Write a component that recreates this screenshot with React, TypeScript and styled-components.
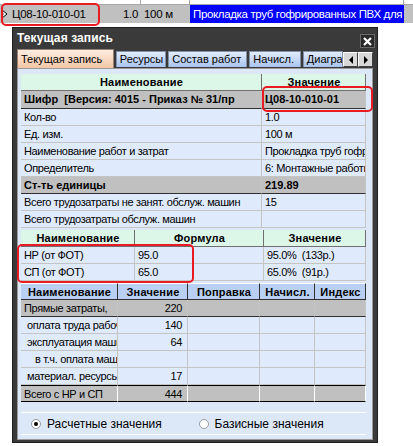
import React, { FC } from "react";
import styled, { createGlobalStyle, css } from "styled-components";

const GlobalStyle = createGlobalStyle`
  body {
    margin: 0;
    background: #ffffff;
    font-family: "Liberation Sans", Arial, sans-serif;
  }
`;

const Page = styled.div`
  width: 413px;
  height: 446px;
  overflow: hidden;
  position: relative;
`;

// строка таблицы за окном
const TopGrid = styled.div`
  display: flex;
  flex-direction: column;
`;

const PrevRow = styled.div`
  display: grid;
  grid-template-columns: 141px 49px 214px 9px;
  height: 4px;
  border-bottom: 1px solid #a8a8a8;
`;

const PrevCell = styled.div`
  border-right: 1px solid #a8a8a8;
`;

const CurRow = styled.div`
  display: grid;
  grid-template-columns: 9px 91px 41px 49px 214px 9px;
  height: 18px;
  background: #c0c0c0;
  border-bottom: 1px solid #ffffff;
  font-size: 11.5px;
  letter-spacing: -0.3px;
  line-height: 18px;
  position: relative;
`;

const RowCell = styled.div<{ align?: string; selected?: boolean }>`
  text-align: ${(p) => p.align || "left"};
  white-space: nowrap;
  overflow: hidden;
  padding: 0 3px;
  ${(p) =>
    p.selected &&
    css`
      background: #0000ff;
      color: #ffffff;
      font-size: 11.5px;
      letter-spacing: -0.35px;
    `}
`;

const Indicator = styled.div`
  display: flex;
  align-items: center;
  justify-content: center;
`;

const Mark = styled.div<{ l: number; t: number; w: number; h: number }>`
  position: absolute;
  left: ${(p) => p.l}px;
  top: ${(p) => p.t}px;
  width: ${(p) => p.w}px;
  height: ${(p) => p.h}px;
  border: 2.5px solid #ea1a22;
  border-radius: 5px;
  box-sizing: border-box;
  pointer-events: none;
`;

// окно
const Window = styled.div`
  margin: 3px 0 0 12px;
  width: 366px;
  box-sizing: border-box;
  background: #3a3a3a;
  border: 1px solid #1e1e1e;
  padding: 0 4px 2px 4px;
`;

const TitleBar = styled.div`
  height: 20px;
  display: flex;
  align-items: center;
  justify-content: space-between;
`;

const Title = styled.div`
  color: #ffffff;
  font-weight: bold;
  font-size: 12px;
  letter-spacing: 0.1px;
`;

const CloseBtn = styled.div`
  width: 13px;
  height: 12px;
  margin-top: 6px;
  margin-right: -2px;
  background: #2a2a2a;
  border: 1px solid #6a6a6a;
  display: flex;
  align-items: center;
  justify-content: center;
`;

const TabStrip = styled.div`
  height: 20px;
  display: flex;
  align-items: flex-end;
`;

const Tab = styled.div<{ active?: boolean; w: number }>`
  width: ${(p) => p.w}px;
  box-sizing: border-box;
  font-size: 11px;
  color: #000;
  white-space: nowrap;
  overflow: hidden;
  padding-left: 3px;
  border: 1px solid #8090a8;
  border-bottom: none;
  ${(p) =>
    p.active
      ? css`
          height: 19px;
          line-height: 18px;
          background: linear-gradient(#fdeee2, #f3c6a6);
          border-color: #9a8070;
        `
      : css`
          height: 16px;
          line-height: 15px;
          margin-left: 2px;
          margin-bottom: 1px;
          background: linear-gradient(#e2ecfc, #a9c4ee);
        `}
`;

const ArrowBtn = styled.div`
  width: 15px;
  height: 15px;
  box-sizing: border-box;
  margin-bottom: 1px;
  background: #d8d8d8;
  border: 1px solid;
  border-color: #ffffff #404040 #404040 #ffffff;
  display: flex;
  align-items: center;
  justify-content: center;
`;

const TabBody = styled.div`
  height: 372px;
  box-sizing: border-box;
  background: #dce8f8;
  border: 1px solid #9a9a9a;
  padding: 5px 6px 0 3px;
  display: flex;
  flex-direction: column;
`;

const Wrap = styled.div<{ gap?: number }>`
  position: relative;
  margin-bottom: ${(p) => p.gap || 0}px;
`;

const Grid = styled.div<{ cols: string }>`
  display: grid;
  grid-template-columns: ${(p) => p.cols};
  width: 345px;
  border-right: 1px solid #b8b8b8;
  box-sizing: border-box;
`;

type Kind = "mint" | "blue" | "gray" | "plain" | "total";

const Cell = styled.div<{ kind?: Kind; align?: string; indent?: number; h?: number }>`
  height: ${(p) => p.h || 17}px;
  line-height: ${(p) => (p.h || 17) - 1}px;
  box-sizing: border-box;
  font-size: 11px;
  letter-spacing: -0.35px;
  white-space: pre;
  overflow: hidden;
  padding: 0 ${(p) => (p.align === "right" ? 5 : 2)}px 0
    ${(p) => 3 + (p.indent || 0)}px;
  text-align: ${(p) => p.align || "left"};
  background: #dfeafc;
  border-right: 1px solid #c4c4c4;
  border-bottom: 1px solid #c4c4c4;
  ${(p) =>
    p.kind === "mint" &&
    css`
      background: #dcf6e8;
      font-weight: bold;
      letter-spacing: 0.2px;
      text-align: center;
      border-right-color: #707070;
      border-bottom-color: #707070;
    `}
  ${(p) =>
    p.kind === "blue" &&
    css`
      background: #b9d0f2;
      font-weight: bold;
      letter-spacing: 0.2px;
      text-align: center;
      border-right: 1px solid #303030;
      border-bottom: 1px solid #303030;
      border-top: 1px solid #ffffff;
    `}
  ${(p) =>
    p.kind === "gray" &&
    css`
      background: #c0c0c0;
      border-bottom-color: #303030;
    `}
  ${(p) =>
    p.kind === "total" &&
    css`
      background: #c0c0c0;
      border-bottom: 1px solid #000;
      border-top: 1px solid #000;
      border-right-color: #ffffff;
    `}
`;

const Bold = styled.span`
  font-weight: bold;
  letter-spacing: 0;
`;

const RadioBar = styled.div`
  margin-top: 10px;
  width: 345px;
  height: 23px;
  box-sizing: border-box;
  border-top: 1px solid #ffffff;
  border-bottom: 1px solid #ffffff;
  display: flex;
  align-items: center;
  font-size: 12px;
`;

const RadioItem = styled.label<{ w: number; pad?: number }>`
  width: ${(p) => p.w}px;
  padding-left: ${(p) => p.pad || 0}px;
  display: flex;
  align-items: center;
  gap: 6px;
`;

const RadioCircle = styled.span<{ checked?: boolean }>`
  width: 10px;
  height: 10px;
  border-radius: 50%;
  box-sizing: border-box;
  background: #ffffff;
  border: 1px solid #9a9a9a;
  display: flex;
  align-items: center;
  justify-content: center;
  &::after {
    content: "";
    width: 4px;
    height: 4px;
    border-radius: 50%;
    background: ${(p) => (p.checked ? "#000" : "transparent")};
  }
`;

const mainRows: { name: string; value: string; gray?: boolean }[] = [
  { name: "Кол-во", value: "1.0" },
  { name: "Ед. изм.", value: "100 м" },
  { name: "Наименование работ и затрат", value: "Прокладка труб гофрированных ПВХ для" },
  { name: "Определитель", value: "6: Монтажные работы" },
  { name: "Ст-ть единицы", value: "219.89", gray: true },
  { name: "Всего трудозатраты не занят. обслуж. машин", value: "15" },
  { name: "Всего трудозатраты обслуж. машин", value: "" },
];

const costRows: { name: string; value: string; indent?: number; kind?: Kind }[] = [
  { name: "Прямые затраты,", value: "220", kind: "gray" },
  { name: "оплата труда рабочих", value: "140", indent: 3 },
  { name: "эксплуатация машин", value: "64", indent: 3 },
  { name: "в т.ч. оплата машинистов", value: "", indent: 11 },
  { name: "материал. ресурсы", value: "17", indent: 3 },
  { name: "Всего с НР и СП", value: "444", kind: "total" },
];

const Triangle: FC<{ dir: "left" | "right" }> = ({ dir }) => (
  <svg width="6" height="8" viewBox="0 0 6 8">
    <polygon points={dir === "left" ? "5,0 5,8 1,4" : "1,0 1,8 5,4"} fill="#000" />
  </svg>
);

const App: FC = () => {
  return (
    <Page>
      <GlobalStyle />
      <TopGrid>
        <PrevRow>
          <PrevCell />
          <PrevCell />
          <PrevCell />
          <div />
        </PrevRow>
        <CurRow>
          <Indicator>
            <svg width="7" height="10" viewBox="0 0 7 10">
              <polygon points="1,1 6,5 1,9 2,5" fill="#fff" stroke="#000" strokeWidth="1" />
            </svg>
          </Indicator>
          <RowCell>Ц08-10-010-01</RowCell>
          <RowCell align="right">1.0</RowCell>
          <RowCell>100 м</RowCell>
          <RowCell selected>Прокладка труб гофрированных ПВХ для</RowCell>
          <RowCell />
          <Mark l={1} t={-2} w={99} h={23} />
        </CurRow>
      </TopGrid>

      <Window>
        <TitleBar>
          <Title>Текущая запись</Title>
          <CloseBtn>
            <svg width="9" height="9" viewBox="0 0 9 9">
              <path d="M1 1 L8 8 M8 1 L1 8" stroke="#fff" strokeWidth="2.2" />
            </svg>
          </CloseBtn>
        </TitleBar>
        <TabStrip>
          <Tab active w={98}>Текущая запись</Tab>
          <Tab w={51}>Ресурсы</Tab>
          <Tab w={80}>Состав работ</Tab>
          <Tab w={52}>Начисл.</Tab>
          <Tab w={41}>Диаграмма</Tab>
          <ArrowBtn>
            <Triangle dir="left" />
          </ArrowBtn>
          <ArrowBtn>
            <Triangle dir="right" />
          </ArrowBtn>
        </TabStrip>

        <TabBody>
          <Wrap gap={2}>
            <Grid cols="241px 104px">
              <Cell kind="mint">Наименование</Cell>
              <Cell kind="mint">Значение</Cell>
              <Cell kind="gray" h={18}>
                <Bold>{"Шифр  [Версия: 4015 - Приказ № 31/пр"}</Bold>
              </Cell>
              <Cell kind="gray" h={18}>
                <Bold>Ц08-10-010-01</Bold>
              </Cell>
              {mainRows.map((r) => (
                <React.Fragment key={r.name}>
                  <Cell kind={r.gray ? "gray" : "plain"}>
                    {r.gray ? <Bold>{r.name}</Bold> : r.name}
                  </Cell>
                  <Cell kind={r.gray ? "gray" : "plain"}>
                    {r.gray ? <Bold>{r.value}</Bold> : r.value}
                  </Cell>
                </React.Fragment>
              ))}
            </Grid>
            <Mark l={241} t={12} w={111} h={26} />
          </Wrap>

          <Wrap gap={2}>
            <Grid cols="114px 129px 102px">
              <Cell kind="mint">Наименование</Cell>
              <Cell kind="mint">Формула</Cell>
              <Cell kind="mint">Значение</Cell>
              <Cell>НР (от ФОТ)</Cell>
              <Cell>95.0</Cell>
              <Cell>95.0%  (133р.)</Cell>
              <Cell>СП (от ФОТ)</Cell>
              <Cell>65.0</Cell>
              <Cell>65.0%  (91р.)</Cell>
            </Grid>
            <Mark l={-4} t={14} w={177} h={39} />
          </Wrap>

          <Wrap>
            <Grid cols="97px 70px 72px 55px 51px">
              <Cell kind="blue">Наименование</Cell>
              <Cell kind="blue">Значение</Cell>
              <Cell kind="blue">Поправка</Cell>
              <Cell kind="blue">Начисл.</Cell>
              <Cell kind="blue">Индекс</Cell>
              {costRows.map((r) => (
                <React.Fragment key={r.name}>
                  <Cell kind={r.kind} indent={r.indent}>
                    {r.name}
                  </Cell>
                  <Cell kind={r.kind} align="right">
                    {r.value}
                  </Cell>
                  <Cell kind={r.kind} />
                  <Cell kind={r.kind} />
                  <Cell kind={r.kind} />
                </React.Fragment>
              ))}
            </Grid>
          </Wrap>

          <RadioBar>
            <RadioItem w={170} pad={10}>
              <RadioCircle checked />
              Расчетные значения
            </RadioItem>
            <RadioItem w={170}>
              <RadioCircle />
              Базисные значения
            </RadioItem>
          </RadioBar>
        </TabBody>
      </Window>
    </Page>
  );
};

export default App;
